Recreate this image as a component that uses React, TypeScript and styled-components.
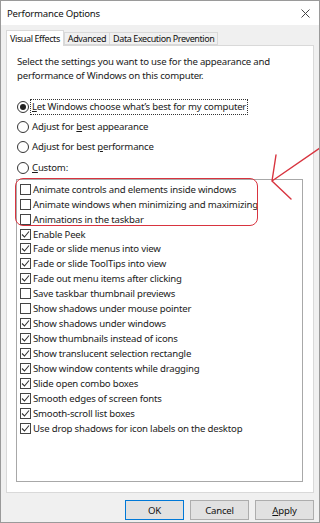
import styled, { createGlobalStyle } from 'styled-components'

const GlobalStyle = createGlobalStyle`
  html, body {
    margin: 0;
    padding: 0;
    background: #f0f0f0;
  }
  body {
    font-family: 'Noto Sans', 'Segoe UI', sans-serif;
    font-size: 9.6px;
    letter-spacing: -0.2px;
    color: #1b1b1b;
  }
`

const options = [
  { label: 'Animate controls and elements inside windows', checked: false },
  { label: 'Animate windows when minimizing and maximizing', checked: false },
  { label: 'Animations in the taskbar', checked: false },
  { label: 'Enable Peek', checked: true },
  { label: 'Fade or slide menus into view', checked: true },
  { label: 'Fade or slide ToolTips into view', checked: true },
  { label: 'Fade out menu items after clicking', checked: true },
  { label: 'Save taskbar thumbnail previews', checked: false },
  { label: 'Show shadows under mouse pointer', checked: false },
  { label: 'Show shadows under windows', checked: true },
  { label: 'Show thumbnails instead of icons', checked: true },
  { label: 'Show translucent selection rectangle', checked: true },
  { label: 'Show window contents while dragging', checked: true },
  { label: 'Slide open combo boxes', checked: true },
  { label: 'Smooth edges of screen fonts', checked: true },
  { label: 'Smooth-scroll list boxes', checked: true },
  { label: 'Use drop shadows for icon labels on the desktop', checked: true },
]

export default function App() {
  return (
    <>
      <GlobalStyle />
      <Window>
        <TitleBar>
          <Title>Performance Options</Title>
          <CloseButton>
            <svg width="9" height="9" viewBox="0 0 9 9">
              <path d="M0.5 0.5 L8.5 8.5 M8.5 0.5 L0.5 8.5" stroke="#444" strokeWidth="1" />
            </svg>
          </CloseButton>
        </TitleBar>
        <Body>
          <TabStrip>
            <Tab $active>Visual Effects</Tab>
            <Tab>Advanced</Tab>
            <Tab>Data Execution Prevention</Tab>
          </TabStrip>
          <Panel>
            <Intro>
              Select the settings you want to use for the appearance and
              <br />
              performance of Windows on this computer.
            </Intro>
            <RadioGroup>
              <RadioRow>
                <Radio $checked />
                <FocusLabel>
                  <u>L</u>et Windows choose what&rsquo;s best for my computer
                </FocusLabel>
              </RadioRow>
              <RadioRow>
                <Radio />
                <RadioLabel>
                  Adjust for <u>b</u>est appearance
                </RadioLabel>
              </RadioRow>
              <RadioRow>
                <Radio />
                <RadioLabel>
                  Adjust for best <u>p</u>erformance
                </RadioLabel>
              </RadioRow>
              <RadioRow>
                <Radio />
                <RadioLabel>
                  <u>C</u>ustom:
                </RadioLabel>
              </RadioRow>
            </RadioGroup>
            <ListBox>
              {options.map((o) => (
                <ListItem key={o.label}>
                  <CheckBox>
                    {o.checked && (
                      <svg width="9" height="9" viewBox="0 0 9 9">
                        <path d="M1 4.5 L3.5 7 L8 1.5" fill="none" stroke="#333" strokeWidth="1.1" />
                      </svg>
                    )}
                  </CheckBox>
                  <span>{o.label}</span>
                </ListItem>
              ))}
            </ListBox>
          </Panel>
          <ButtonRow>
            <DialogButton $default>OK</DialogButton>
            <DialogButton>Cancel</DialogButton>
            <DialogButton>
              <u>A</u>pply
            </DialogButton>
          </ButtonRow>
        </Body>
        <Highlight />
        <Arrow viewBox="0 0 318 521" width="318" height="521">
          <path
            d="M319 147 L271 180 M271 180 L275 154 M271 180 L290 198"
            fill="none"
            stroke="#d8343f"
            strokeWidth="1.4"
            strokeLinecap="round"
          />
        </Arrow>
      </Window>
    </>
  )
}

const Window = styled.div`
  position: relative;
  width: 320px;
  height: 523px;
  box-sizing: border-box;
  border: 1px solid #9a9a9a;
  background: #f0f0f0;
  display: flex;
  flex-direction: column;
  overflow: hidden;
`

const TitleBar = styled.div`
  height: 24px;
  background: #ffffff;
  display: flex;
  align-items: center;
  justify-content: space-between;
  padding: 0 9px 0 6px;
`

const Title = styled.span`
  font-size: 9.6px;
  color: #111;
`

const CloseButton = styled.div`
  display: flex;
  align-items: center;
  padding-top: 1px;
`

const Body = styled.div`
  flex: 1;
  display: flex;
  flex-direction: column;
  padding: 5px 5px 0 5px;
`

const TabStrip = styled.div`
  display: flex;
  align-items: flex-end;
  height: 15px;
  position: relative;
  z-index: 1;
`

const Tab = styled.div<{ $active?: boolean }>`
  box-sizing: border-box;
  height: ${(p) => (p.$active ? '16px' : '13px')};
  margin-bottom: ${(p) => (p.$active ? '-1px' : '0')};
  padding: 0 3px;
  display: flex;
  align-items: center;
  background: ${(p) => (p.$active ? '#ffffff' : '#f0f0f0')};
  border: 1px solid #d9d9d9;
  border-bottom: ${(p) => (p.$active ? 'none' : '1px solid #d9d9d9')};
  margin-right: ${(p) => (p.$active ? '0' : '-1px')};
  font-size: 9px;
  letter-spacing: -0.4px;
  line-height: 13px;
  color: #111;
  white-space: nowrap;
`

const Panel = styled.div`
  box-sizing: border-box;
  width: 308px;
  height: 448px;
  background: #ffffff;
  border: 1px solid #d9d9d9;
  padding: 9px 0 0 9px;
  display: flex;
  flex-direction: column;
`

const Intro = styled.p`
  margin: 0 0 0 1px;
  line-height: 14px;
  white-space: nowrap;
`

const RadioGroup = styled.div`
  margin-top: 14px;
  display: flex;
  flex-direction: column;
`

const RadioRow = styled.div`
  height: 20.2px;
  display: flex;
  align-items: center;
  margin-left: 1px;
  gap: 2px;
`

const Radio = styled.span<{ $checked?: boolean }>`
  box-sizing: border-box;
  width: 12px;
  height: 12px;
  border: 1px solid #333;
  border-radius: 50%;
  background: #fff;
  display: flex;
  align-items: center;
  justify-content: center;

  &::after {
    content: '';
    width: 6px;
    height: 6px;
    border-radius: 50%;
    background: ${(p) => (p.$checked ? '#222' : 'transparent')};
  }
`

const RadioLabel = styled.span`
  padding: 0 1px;
  line-height: 14px;
  white-space: nowrap;
`

const FocusLabel = styled(RadioLabel)`
  outline: 1px dotted #333;
  outline-offset: 0;
`

const ListBox = styled.div`
  box-sizing: border-box;
  width: 287px;
  height: 303px;
  margin-top: 1px;
  border: 1px solid #a8a8a8;
  padding: 2px 0 0 3px;
  display: flex;
  flex-direction: column;
`

const ListItem = styled.div`
  height: 14.95px;
  display: flex;
  align-items: center;
  gap: 2px;
  white-space: nowrap;
  line-height: 15px;
`

const CheckBox = styled.span`
  box-sizing: border-box;
  width: 11px;
  height: 11px;
  border: 1px solid #444;
  background: #fff;
  display: flex;
  align-items: center;
  justify-content: center;
  flex-shrink: 0;
`

const ButtonRow = styled.div`
  display: flex;
  justify-content: flex-end;
  gap: 6px;
  margin-top: 7px;
`

const DialogButton = styled.div<{ $default?: boolean }>`
  box-sizing: border-box;
  width: 59px;
  height: 20px;
  display: flex;
  align-items: center;
  justify-content: center;
  background: #e1e1e1;
  border: 1px solid ${(p) => (p.$default ? '#0078d7' : '#adadad')};
  color: #111;
`

const Highlight = styled.div`
  position: absolute;
  left: 14px;
  top: 177px;
  width: 243px;
  height: 48px;
  box-sizing: border-box;
  border: 1.5px solid #d8343f;
  border-radius: 8px;
  pointer-events: none;
`

const Arrow = styled.svg`
  position: absolute;
  left: 0;
  top: 0;
  pointer-events: none;
`
